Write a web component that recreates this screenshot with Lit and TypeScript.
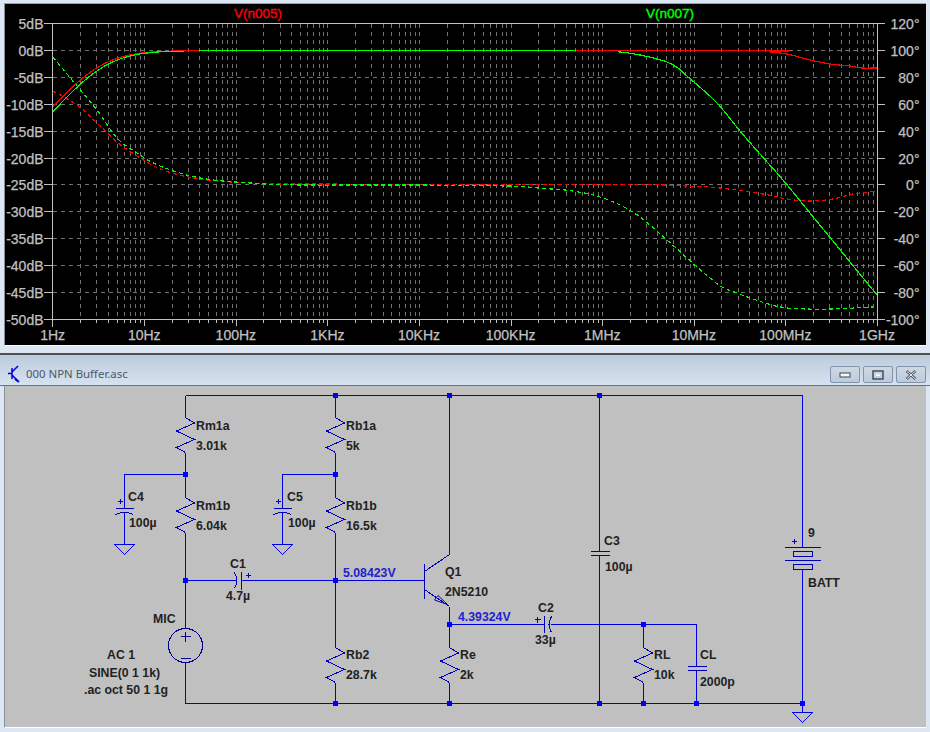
import { LitElement, html, svg, css } from "lit";
import { customElement } from "lit/decorators.js";

type P = [number, number];

const X0 = 52.67;
const DEC = (877 - X0) / 9;
const Y0 = 23;
const ROW = 26.9;

function smooth(pts: P[]): string {
  let d = `M${pts[0][0]} ${pts[0][1]}`;
  for (let i = 0; i < pts.length - 1; i++) {
    const p0 = pts[Math.max(i - 1, 0)];
    const p1 = pts[i];
    const p2 = pts[i + 1];
    const p3 = pts[Math.min(i + 2, pts.length - 1)];
    const c1x = p1[0] + (p2[0] - p0[0]) / 6;
    const c1y = p1[1] + (p2[1] - p0[1]) / 6;
    const c2x = p2[0] - (p3[0] - p1[0]) / 6;
    const c2y = p2[1] - (p3[1] - p1[1]) / 6;
    d += `C${c1x.toFixed(2)} ${c1y.toFixed(2)} ${c2x.toFixed(2)} ${c2y.toFixed(2)} ${p2[0]} ${p2[1]}`;
  }
  return d;
}

function highPass(fc: number): P[] {
  const out: P[] = [];
  for (let x = 53; x <= 340; x += 6) {
    const f = Math.pow(10, (x - X0) / DEC);
    const db = 10 * Math.log10(1 + (fc / f) * (fc / f));
    out.push([x, +(50.5 + db * 5.38).toFixed(2)]);
  }
  return out;
}

const GREEN_MAG: P[] = [
  ...highPass(3.6),
  [590, 50.5], [620, 52], [640, 55], [653, 58], [667, 62], [678, 68], [687, 76], [702, 89],
  [718, 104], [740, 131], [760, 154], [783, 180], [813, 216.7], [828, 235], [852, 264.4], [877, 295],
];
const RED_MAG: P[] = [
  ...highPass(3.2),
  [753, 50.5], [770, 52], [787, 54], [810, 60], [830, 64], [850, 66], [862, 68], [877, 68],
];
const GREEN_PH: P[] = [
  [53, 57], [77, 86], [97, 110], [117, 138], [137, 153], [160, 166], [200, 178], [250, 183],
  [300, 185], [405, 185], [507, 186], [543, 188.5], [565, 190], [593, 195], [618, 204],
  [640, 217], [667, 240], [697, 267], [710, 278], [722, 287], [737, 293], [753, 299],
  [780, 307], [807, 309], [833, 309], [873, 307],
];
const RED_PH: P[] = [
  [53, 91], [77, 105], [97, 123], [117, 142], [137, 156], [163, 170], [200, 179], [250, 183],
  [300, 184], [620, 184.5], [687, 186], [720, 188], [763, 194], [787, 199], [810, 201],
  [833, 199], [853, 194], [877, 191],
];

const XLABELS = ["1Hz", "10Hz", "100Hz", "1KHz", "10KHz", "100KHz", "1MHz", "10MHz", "100MHz", "1GHz"];
const DB = ["5dB", "0dB", "-5dB", "-10dB", "-15dB", "-20dB", "-25dB", "-30dB", "-35dB", "-40dB", "-45dB", "-50dB"];
const DEG = ["120°", "100°", "80°", "60°", "40°", "20°", "0°", "-20°", "-40°", "-60°", "-80°", "-100°"];

function plot() {
  const bottom = Y0 + ROW * 11;
  const vgrid: unknown[] = [];
  const ticks: unknown[] = [];
  for (let d = 0; d < 9; d++) {
    for (let m = 1; m <= 9; m++) {
      const x = Math.round(X0 + DEC * d + DEC * Math.log10(m)) + 0.5;
      if (m === 1 && d === 0) continue;
      vgrid.push(svg`<line class="grid" x1=${x} x2=${x} y1="24" y2=${bottom}></line>`);
      ticks.push(svg`<line class="axis" x1=${x} x2=${x} y1=${bottom} y2=${bottom + (m === 1 ? 7 : 4)}></line>`);
    }
  }
  ticks.push(svg`<line class="axis" x1="877.5" x2="877.5" y1=${bottom} y2=${bottom + 7}></line>`);
  const rows = DB.map((_, i) => Math.round(Y0 + ROW * i) + 0.5);
  return svg`
    <svg class="plot" viewBox="5 4 921 341" width="921" height="341">
      ${rows.slice(1, -1).map(
        (y) => svg`<line class="grid" x1="53" x2="877" y1=${y} y2=${y}></line>`
      )}
      ${vgrid}
      ${rows.map((y) => svg`
        <line class="axis" x1="44" x2="52" y1=${y} y2=${y}></line>
        <line class="axis" x1="877" x2="885" y1=${y} y2=${y}></line>`)}
      <line class="axis" x1="52" x2="877" y1=${rows[0]} y2=${rows[0]}></line>
      <line class="axis" x1="52" x2="877" y1=${rows[11]} y2=${rows[11]}></line>
      <line class="axis" x1="52.5" x2="52.5" y1=${rows[0]} y2=${rows[11] + 7}></line>
      <line class="axis" x1="877.5" x2="877.5" y1=${rows[0]} y2=${rows[11]}></line>
      ${ticks}
      <path class="trace dash red" d=${smooth(RED_PH)}></path>
      <path class="trace dash green" d=${smooth(GREEN_PH)}></path>
      <path class="trace red" d=${smooth(RED_MAG)}></path>
      <path class="trace green" d=${smooth(GREEN_MAG)}></path>
      <path class="trace red" d="M172 50.5H199M576 50.5H622"></path>
      ${DB.map((t, i) => svg`<text class="lab" x="43.5" y=${rows[i] + 5} text-anchor="end">${t}</text>`)}
      ${DEG.map((t, i) => svg`<text class="lab" x="919.5" y=${rows[i] + 5} text-anchor="end">${t}</text>`)}
      ${XLABELS.map(
        (t, i) => svg`<text class="lab" x=${X0 + DEC * i} y="340" text-anchor="middle">${t}</text>`
      )}
      <text class="lab title-red" x="234" y="18">V(n005)</text>
      <text class="lab title-green" x="646" y="18">V(n007)</text>
    </svg>`;
}

function resistor(x: number, y: number) {
  const pts = [[0, 0], [9, 5.5], [-9, 13.5], [9, 22], [-9, 30], [0, 35]]
    .map(([a, b]) => `${x + a},${y + b}`)
    .join(" ");
  return svg`<polyline class="sym" points=${pts}></polyline>`;
}

function ground(x: number, y: number) {
  return svg`<polygon class="wire" points="${x - 10},${y} ${x + 10},${y} ${x},${y + 10}"></polygon>`;
}

function polarCap(x: number, y: number) {
  return svg`
    <path class="sym" d="M${x - 9} ${y}H${x + 9}"></path>
    <path class="sym" d="M${x - 9} ${y + 6}Q${x} ${y + 2} ${x + 9} ${y + 6}"></path>
    <path class="sym" d="M${x - 6.5} ${y - 7.5}h5M${x - 4} ${y - 10}v5"></path>`;
}

const WIRES = [
  "M185 395H802",
  "M185 395V417M185 452V497M185 532V628M185 662V703H802",
  "M335 395V417M335 452V497M335 532V647M335 682V703",
  "M185 474H124V508M124 512V544",
  "M335 474H282V508M282 512V544",
  "M185 580H236M241 580H335",
  "M335 580H424",
  "M449 395V554M449 606V647M449 682V703",
  "M449 624H544M550 624H696V666M696 670V703",
  "M599 395V551M599 555V703",
  "M643 624V647M643 682V703",
  "M802 395V547M802 569V712",
];

const NODES: P[] = [
  [185, 474], [185, 580], [335, 395], [335, 474], [335, 580], [449, 395], [599, 395], [449, 624],
  [643, 624], [335, 703], [449, 703], [599, 703], [643, 703], [696, 703], [802, 703],
];

const LABELS: [string, number, number][] = [
  ["Rm1a", 196, 430], ["3.01k", 196, 450], ["Rm1b", 196, 510], ["6.04k", 196, 530],
  ["C4", 128, 501], ["100µ", 129, 527], ["C5", 287, 501], ["100µ", 288, 527],
  ["Rb1a", 346, 430], ["5k", 346, 450], ["Rb1b", 346, 510], ["16.5k", 346, 530],
  ["C1", 230, 568], ["4.7µ", 226, 600], ["MIC", 153, 623], ["AC 1", 107, 659],
  ["SINE(0 1 1k)", 89, 677], [".ac oct 50 1 1g", 84, 694],
  ["Q1", 445, 576], ["2N5210", 445, 596], ["C2", 538, 612], ["33µ", 535, 644],
  ["Rb2", 346, 659], ["28.7k", 346, 679], ["Re", 460, 659], ["2k", 460, 679],
  ["C3", 604, 545], ["100µ", 605, 571], ["RL", 654, 659], ["10k", 654, 679],
  ["CL", 700, 659], ["2000p", 700, 686], ["9", 808, 537], ["BATT", 808, 587],
];

function schematic() {
  return svg`
    <svg class="sch" viewBox="5 386 921 341" width="921" height="341">
      <g transform="translate(.5 .5)">
        ${WIRES.map((d) => svg`<path class="wire" d=${d}></path>`)}
        ${NODES.map(([x, y]) => svg`<rect class="node" x=${x - 2.5} y=${y - 2.5} width="5" height="5"></rect>`)}
        ${[[185, 417], [185, 497], [335, 417], [335, 497], [335, 647], [449, 647], [643, 647]].map(([x, y]) => resistor(x, y))}
        ${polarCap(124, 508)}
        ${polarCap(282, 508)}
        ${ground(124, 544)}
        ${ground(282, 544)}
        ${ground(802, 712)}

        <path class="sym" d="M241 571V589M234 572Q239 580 234 588M245 575h5M247.5 572.500v5"></path>
        <path class="sym" d="M544 615V632M551 616Q546 624 551 632M534 619h6M537 616.500v6"></path>
        <path class="sym" d="M687 666H706M687 670H706"></path>
        <path class="sym" d="M590 551H609M590 555H609"></path>

        <circle class="src" cx="185" cy="645" r="17"></circle>
        <path class="src" d="M180 636H190M185 631V641M180 658H190"></path>

        <path class="sym" d="M424 563V598M424 571L449 554M424 589L449 606"></path>
        <path class="hollow" d="M447 604L437.500 595L434 599.500Z"></path>

        <path class="sym" d="M784 547H820M784 560H820M791 541h5M793.500 538.500v5"></path>
        <rect class="batt" x="793" y="551" width="19" height="4.500"></rect>
        <rect class="batt" x="793" y="564" width="19" height="5"></rect>
      </g>
      ${LABELS.map(([t, x, y]) => svg`<text class="cap" x=${x} y=${y}>${t}</text>`)}
      <text class="cap volt" x="343" y="577">5.08423V</text>
      <text class="cap volt" x="458" y="621">4.39324V</text>
    </svg>`;
}

@customElement("app-root")
export class AppRoot extends LitElement {
  static styles = css`
    :host {
      display: block;
      width: 930px;
      height: 732px;
      overflow: hidden;
      background: #dce7f3;
    }
    .plotpane {
      padding: 3px 4px 7px 4px;
    }
    .plotframe {
      display: flex;
      width: 922px;
      box-sizing: border-box;
      border-top: 1px solid #98a4b0;
      border-left: 1px solid #8a8f96;
      border-bottom: 1px solid #ffffff;
    }
    svg {
      display: block;
    }
    .plot {
      background: #000;
    }
    .grid {
      stroke: #727272;
      stroke-width: 1;
      stroke-dasharray: 4 4;
      shape-rendering: crispEdges;
    }
    .axis {
      stroke: #c0c0c0;
      stroke-width: 1;
      shape-rendering: crispEdges;
    }
    .trace {
      fill: none;
      stroke-width: 1.2;
      shape-rendering: crispEdges;
    }
    .red {
      stroke: #ff0000;
    }
    .green {
      stroke: #00ff00;
    }
    .dash {
      stroke-dasharray: 4 3;
    }
    .lab {
      font: 14px "Liberation Sans", Arial, sans-serif;
      fill: #c0c0c0;
      stroke: #c0c0c0;
      stroke-width: 0.25;
    }
    .title-red {
      font-size: 13.5px;
      fill: #ff0000;
      stroke: #ff0000;
      stroke-width: 0.4;
    }
    .title-green {
      font-size: 13.5px;
      fill: #00ff00;
      stroke: #00ff00;
      stroke-width: 0.4;
    }
    .window {
      border-top: 2px solid #505050;
    }
    .titlebar {
      display: flex;
      align-items: flex-end;
      height: 31px;
      box-sizing: border-box;
      padding: 0 4px 2px 7px;
      background: linear-gradient(#bccbdc, #d6e2ef);
      border-bottom: 1px solid #6e7276;
    }
    .titlebar .icon {
      flex: none;
    }
    .titlebar .name {
      margin-left: 6px;
      font: 11.4px "Noto Sans", "Open Sans", sans-serif;
      line-height: 18px;
      color: #4e5866;
      flex: 1;
    }
    .btns {
      display: flex;
      gap: 3px;
    }
    .btn {
      width: 30px;
      height: 17px;
      box-sizing: border-box;
      border: 1px solid #8294ab;
      border-radius: 2px;
      background: linear-gradient(#ced9e6, #bccada);
      display: flex;
      align-items: center;
      justify-content: center;
    }
    .canvas {
      margin-left: 4px;
      width: 922px;
      border-left: 1px solid #8a8f96;
      border-bottom: 1px solid #ffffff;
      box-sizing: border-box;
    }
    .sch {
      background: #c0c0c0;
    }
    .wire {
      fill: none;
      stroke: #0000e0;
      stroke-width: 1;
      shape-rendering: crispEdges;
    }
    .sym {
      fill: none;
      stroke: #0000b8;
      stroke-width: 1;
      shape-rendering: crispEdges;
    }
    .hollow {
      fill: none;
      stroke: #0000b8;
      stroke-width: 1;
    }
    .batt {
      fill: none;
      stroke: #0000b8;
      stroke-width: 1;
      shape-rendering: crispEdges;
    }
    .src {
      fill: none;
      stroke: #000090;
      stroke-width: 1;
      shape-rendering: crispEdges;
    }
    .node {
      fill: #0000ff;
      shape-rendering: crispEdges;
    }
    .cap {
      font: bold 12.3px "Liberation Sans", Arial, sans-serif;
      fill: #222222;
    }
    .volt {
      fill: #2222cc;
    }
  `;

  render() {
    return html`
      <div class="plotpane">
        <div class="plotframe">${plot()}</div>
      </div>
      <div class="window">
        <div class="titlebar">
          <svg class="icon" width="13" height="18" viewBox="0 0 13 18">
            <path d="M5 3V14M1 8.500H5M5 7L11 1M5 10L11 16" fill="none" stroke="#0000e0" stroke-width="1.500"></path>
            <path d="M8 14L12 17" fill="none" stroke="#0000e0" stroke-width="2"></path>
          </svg>
          <span class="name">000 NPN Buffer.asc</span>
          <div class="btns">
            <div class="btn">
              <svg width="12" height="6" viewBox="0 0 12 6"><rect x="1" y="1" width="10" height="4" fill="#f4f6f8" stroke="#3c4650"></rect></svg>
            </div>
            <div class="btn">
              <svg width="12" height="10" viewBox="0 0 12 10"><rect x="1" y="1" width="10" height="8" fill="none" stroke="#3c4650" stroke-width="1.400"></rect><rect x="4" y="4" width="4" height="2" fill="#f4f6f8"></rect></svg>
            </div>
            <div class="btn">
              <svg width="12" height="10" viewBox="0 0 12 10"><path d="M1.500 1L10.500 9M10.500 1L1.500 9" fill="none" stroke="#4a5460" stroke-width="2.400"></path><path d="M1.500 1L10.500 9M10.500 1L1.500 9" fill="none" stroke="#f2f4f6" stroke-width="1"></path></svg>
            </div>
          </div>
        </div>
        <div class="canvas">${schematic()}</div>
      </div>
    `;
  }
}
